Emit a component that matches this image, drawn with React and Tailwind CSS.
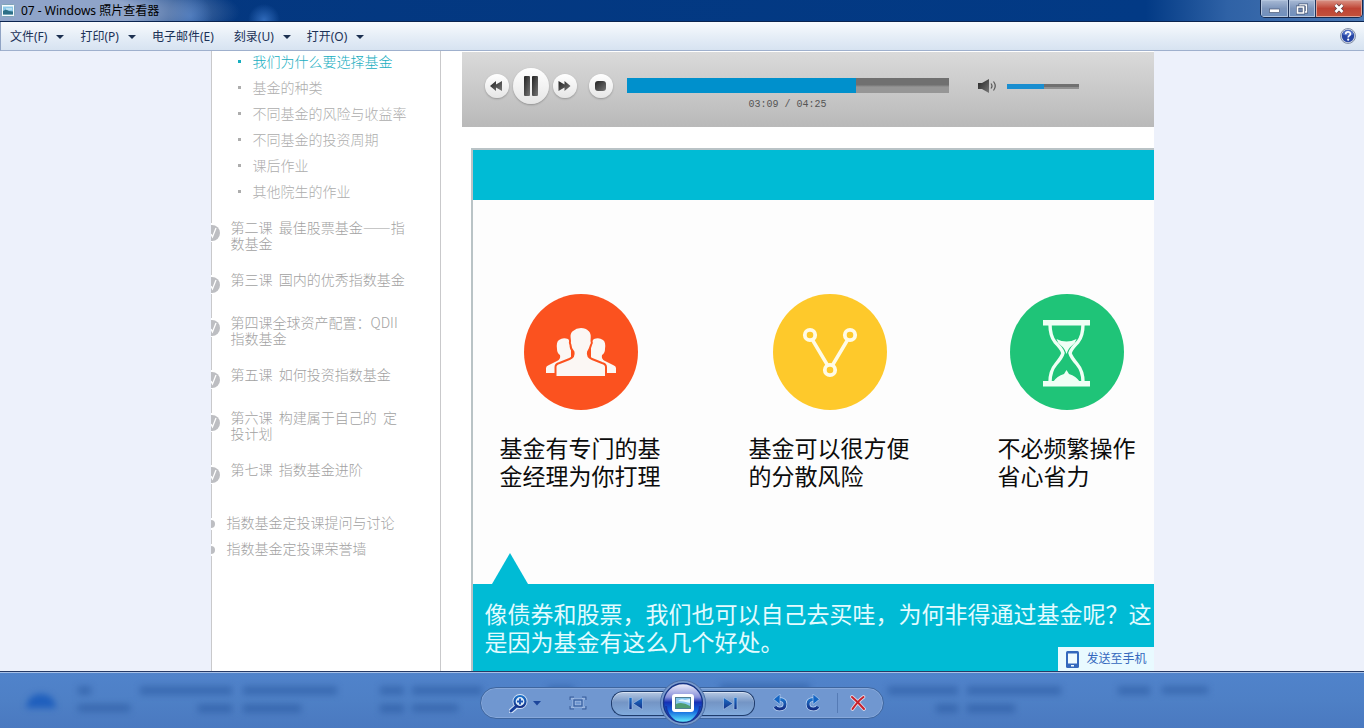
import React from "react";

const uiFont = "font-['Noto_Sans','Noto_Sans_CJK_SC',sans-serif]";

const menus = [
  { label: "文件(F)", arrow: true },
  { label: "打印(P)", arrow: true },
  { label: "电子邮件(E)", arrow: false },
  { label: "刻录(U)", arrow: true },
  { label: "打开(O)", arrow: true },
];

const topics = ["我们为什么要选择基金", "基金的种类", "不同基金的风险与收益率", "不同基金的投资周期", "课后作业", "其他院生的作业"];

const lessons = [
  "第二课\u00a0 最佳股票基金——指数基金",
  "第三课\u00a0 国内的优秀指数基金",
  "第四课全球资产配置：QDII指数基金",
  "第五课\u00a0 如何投资指数基金",
  "第六课\u00a0 构建属于自己的\u00a0 定投计划",
  "第七课\u00a0 指数基金进阶",
];

function PhotoIcon() {
  return (
    <svg width="14" height="13" viewBox="0 0 14 13" aria-hidden="true">
      <rect x="0.5" y="0.5" width="13" height="12" rx="1" fill="#f7fbfd" stroke="#7fa3b8" />
      <rect x="2" y="2.5" width="10" height="8" fill="#8cc8e8" />
      <path d="M2 7l3-1.5 3 1.5 4 .5v3H2z" fill="#2d6f86" />
      <path d="M5 4.5h6v1H5z" fill="#e3f4fb" />
    </svg>
  );
}

function TitleBar() {
  return (
    <header className="flex h-[22px] shrink-0 items-start justify-between border-b border-[#0a2450] bg-[radial-gradient(ellipse_190px_40px_at_50px_12px,#8fa4c9_45%,transparent_100%),radial-gradient(circle_at_190px_16px,#1d5cb4_0,transparent_22px),radial-gradient(circle_at_264px_20px,#2f69b9_0,transparent_16px),linear-gradient(90deg,#04377f_0%,#023a85_84%,#2f62a6_90%,#4b78b4_100%)]">
      <div className="flex h-[21px] items-center gap-1.5 pl-px">
        <PhotoIcon />
        <h1 className="text-xs leading-5 text-black">07 - Windows 照片查看器</h1>
      </div>
      <div className="mr-px flex h-[18px] overflow-hidden rounded-b-[5px] border border-t-0 border-[#16294d]">
        <button aria-label="最小化" className="flex w-7 items-center justify-center border-r border-[#20355c] bg-linear-to-b from-[#a9bbd6] via-[#7d95bb] to-[#6f90bf] shadow-[inset_0_0_0_1px_#b4c5de]">
          <svg width="11" height="10" viewBox="0 0 11 10"><rect x="0.5" y="5" width="10" height="3.500" fill="#fff" stroke="#4a5a78" strokeWidth="0.7" /></svg>
        </button>
        <button aria-label="还原" className="flex w-[27px] items-center justify-center border-r border-[#20355c] bg-linear-to-b from-[#a9bbd6] via-[#7d95bb] to-[#6f90bf] shadow-[inset_0_0_0_1px_#b4c5de]">
          <svg width="12" height="12" viewBox="0 0 12 12" fill="none">
            <path d="M4 2h6.500v7H4z" stroke="#46587a" strokeWidth="3" />
            <path d="M4 2h6.500v7H4z" stroke="#fff" strokeWidth="1.500" />
            <path d="M1.500 4h6v6h-6z" fill="#6d83aa" stroke="#46587a" strokeWidth="3" />
            <path d="M1.500 4h6v6h-6z" stroke="#fff" strokeWidth="1.700" />
          </svg>
        </button>
        <button aria-label="关闭" className="flex w-[46px] items-center justify-center bg-linear-to-b from-[#d99387] via-[#bf4334] to-[#c2523c] shadow-[inset_0_0_0_1px_#dda398]">
          <svg width="12" height="11" viewBox="0 0 12 11">
            <path d="M2.500 2l7 7M9.500 2l-7 7" stroke="#5d3b40" strokeWidth="4" />
            <path d="M2.500 2l7 7M9.500 2l-7 7" stroke="#fff" strokeWidth="2.600" />
          </svg>
        </button>
      </div>
    </header>
  );
}

function MenuBar() {
  return (
    <nav className="flex h-[29px] shrink-0 items-center justify-between border-b border-l border-b-[#9fb0cd] border-l-[#8fa3c4] bg-linear-to-b from-[#f8fbfe] via-[#e6eef7] to-[#d7e3f1] pr-2 pl-[9px]">
      <div className="flex items-center gap-4 pt-px">
        {menus.map((m) => (
          <button key={m.label} className={`flex items-center gap-[9px] text-xs leading-5 whitespace-nowrap text-[#1b3157] ${m.arrow ? "" : "pr-1"}`}>
            {m.label}
            {m.arrow && (
              <svg width="8" height="4" viewBox="0 0 8 4" aria-hidden="true"><path d="M0 0h8L4 4z" fill="#1c3050" /></svg>
            )}
          </button>
        ))}
      </div>
      <button aria-label="帮助">
        <svg width="16" height="16" viewBox="0 0 16 16">
          <circle cx="8" cy="8" r="7.500" fill="#d3dae6" stroke="#6e7c98" strokeWidth="0.800" />
          <circle cx="8" cy="8" r="6.200" fill="#2746a5" />
          <path d="M2.500 6.500a5.600 5.600 0 0 1 11 0q-5.500 2-11 0z" fill="#5573c6" />
          <path d="M5.700 6.200c0-3 4.700-3 4.700-.2 0 1.600-2.200 1.600-2.200 3.400" fill="none" stroke="#fff" strokeWidth="1.700" />
          <circle cx="8.200" cy="11.700" r="1.100" fill="#fff" />
        </svg>
      </button>
    </nav>
  );
}

function Sidebar() {
  return (
    <aside className="w-[230px] shrink-0 border-x border-[#c9c9cb] bg-white font-['Noto_Sans_CJK_SC',sans-serif] text-sm font-light whitespace-nowrap text-[#a2a2a2]">
      <ul className="flex flex-col gap-1.5 pl-[26px] leading-5">
        {topics.map((t, i) => (
          <li key={t} className={i === 0 ? "text-[#17aebf]" : "text-[#adadad]"}>
            <a href="#topic" className="flex items-center gap-3">
              <span className="size-[3px] bg-current" />
              {t}
            </a>
          </li>
        ))}
      </ul>
      <ul className="-ml-px flex flex-col gap-5 pt-[18px] leading-4">
        {lessons.map((lesson) => (
          <li key={lesson} className="flex min-h-[23px] items-start gap-[11px]">
            <svg width="9" height="23" viewBox="0 0 9 23" className="shrink-0" aria-hidden="true">
              <path d="M0 4h9v19H0z" fill="#fff" />
              <circle cx="1" cy="14" r="8" fill="#bdbec2" />
              <path d="M0 15l1.500 3L5 9" fill="none" stroke="#fff" strokeWidth="1.300" />
            </svg>
            <a href="#lesson" className="block w-[178px] whitespace-normal">{lesson}</a>
          </li>
        ))}
      </ul>
      <ul className="-ml-px flex flex-col gap-2.5 pt-[30px] leading-4">
        {["指数基金定投课提问与讨论", "指数基金定投课荣誉墙"].map((t) => (
          <li key={t} className="flex items-center gap-3">
            <svg width="4" height="16" viewBox="0 0 4 16" aria-hidden="true">
              <path d="M0 4h4v12H0z" fill="#fff" />
              <circle cx="0" cy="10" r="4" fill="#bdbec2" />
            </svg>
            <a href="#discussion">{t}</a>
          </li>
        ))}
      </ul>
    </aside>
  );
}

const round = "flex size-6 items-center justify-center rounded-full bg-linear-to-b from-white to-[#e6e6e6] shadow-[0_1px_2px_rgba(0,0,0,0.25)]";

function Player() {
  return (
    <section className="flex h-[75px] items-start bg-linear-to-b from-[#dadada] to-[#b9b9b9] pt-4 pl-[23px]">
      <svg width="0" height="0" className="absolute" aria-hidden="true">
        <linearGradient id="ink" x1="0" x2="1" y1="0" y2="1">
          <stop offset="0" stopColor="#222" />
          <stop offset="1" stopColor="#777" />
        </linearGradient>
      </svg>
      <div className="flex h-9 items-center gap-1">
        <button aria-label="后退" className={round}>
          <svg width="13" height="10" viewBox="0 0 13 10"><path d="M0 5l6-5v3.500L12 0v10L6 6.500V10z" fill="url(#ink)" /></svg>
        </button>
        <button aria-label="暂停" className="flex size-9 items-center justify-center rounded-full bg-linear-to-b from-white to-[#e6e6e6] shadow-[0_1px_2px_rgba(0,0,0,0.25)]">
          <svg width="14" height="20" viewBox="0 0 14 20"><rect width="6" height="20" rx="1" fill="url(#ink)" /><rect x="8" width="6" height="20" rx="1" fill="url(#ink)" /></svg>
        </button>
        <button aria-label="前进" className={round}>
          <svg width="13" height="10" viewBox="0 0 13 10"><path d="M12.500 5l-6-5v3.500L.5 0v10l6-3.500V10z" fill="url(#ink)" /></svg>
        </button>
      </div>
      <div className="flex h-9 items-center pl-3">
        <button aria-label="停止" className={round}>
          <svg width="11" height="10" viewBox="0 0 11 10"><rect width="11" height="10" rx="3" fill="url(#ink)" /></svg>
        </button>
      </div>
      <div className="ml-[14px] flex w-[322px] flex-col items-center pt-2.5">
        <input
          type="range" aria-label="播放进度" min="0" max="265" defaultValue="189"
          className="m-0 block h-[15px] w-full appearance-none bg-[linear-gradient(90deg,#0090cc_71%,transparent_71%),linear-gradient(180deg,#707070_45%,#969696_60%)] [&::-webkit-slider-thumb]:size-0 [&::-webkit-slider-thumb]:appearance-none"
        />
        <span className="pt-1 font-['Liberation_Mono',monospace] text-[10px] leading-4 text-[#555]">03:09 / 04:25</span>
      </div>
      <div className="flex h-9 items-center gap-2.5 pl-[29px]">
        <svg width="19" height="14" viewBox="0 0 19 14" role="img" aria-label="音量">
          <path d="M0 4h4l7-4v14L4 10H0z" fill="url(#ink)" />
          <path d="M13 4.500q2 2.500 0 5M15.500 2.500q3.500 4.500 0 9" fill="none" stroke="#555" strokeWidth="1.200" />
        </svg>
        <input
          type="range" aria-label="音量" defaultValue="50"
          className="m-0 block h-[5px] w-[72px] appearance-none bg-[linear-gradient(90deg,#1a8ed0_51%,transparent_51%),linear-gradient(180deg,#707070_50%,#909090_60%)] [&::-webkit-slider-thumb]:size-0 [&::-webkit-slider-thumb]:appearance-none"
        />
      </div>
    </section>
  );
}

function PeopleDrawing() {
  return (
    <svg width="114" height="116" viewBox="0 0 114 116" aria-hidden="true">
      <ellipse cx="57" cy="58" rx="57" ry="58" fill="#fb521f" />
      <g fill="#fbf7f4">
        <path d="M22 79v-5q0-2 3-3l8-4q4-2 3-6-3-2-3-6-1-7 2-9 4-3 9-1 3 2 3 9v12l1 5-12 6-2 2z" />
        <path d="M92 79v-5q0-2-3-3l-8-4q-4-2-3-6 3-2 3-6 1-7-2-9-4-3-9-1-3 2-3 9v12l-1 5 12 6 2 2z" />
        <path d="M31.500 83V73q0-3 4-4l10-4q5-2 4-7-3-3-3-7-1-2-.5-4-1.500-8 2-10.500 4-3.500 9-3.500t8.500 3.500q3 2.500 2 10.500 1 2-.5 4-1 4-3 7-1 5 4 7l10 4q4 1 4 4v10z" stroke="#fb521f" strokeWidth="2" />
      </g>
    </svg>
  );
}

function NodesDrawing() {
  return (
    <svg width="114" height="116" viewBox="0 0 114 116" aria-hidden="true">
      <ellipse cx="57" cy="58" rx="57" ry="58" fill="#fec92b" />
      <path d="M39.500 46L55 72M74.500 46L59 72" stroke="#fffbe6" strokeWidth="3.500" />
      <g fill="#fec92b" stroke="#fffbe6" strokeWidth="3.800">
        <circle cx="37" cy="41" r="5.200" />
        <circle cx="77" cy="41" r="5.200" />
        <circle cx="57" cy="76" r="5.200" />
      </g>
    </svg>
  );
}

function HourglassDrawing() {
  return (
    <svg width="114" height="116" viewBox="0 0 114 116" aria-hidden="true">
      <ellipse cx="57" cy="58" rx="57" ry="58" fill="#1fc478" />
      <g fill="#effff5">
        <path d="M33 26h47v5.500H33zM33 87h47v5.500H33z" />
        <path d="M46.500 45q10 5 20 0-1 4-5 7-3 2-5 8-2-6-5-8-4-3-5-7z" />
        <path d="M43 88q4-6 11-8l2.500-4 2.500 4q7 2 11 8z" />
        <path d="M40 30q0 12 5 18 7 7 8 11-1 4-7 11-6 7-6 18M73 30q0 12-5 18-7 7-8 11 1 4 7 11 6 7 6 18" fill="none" stroke="#effff5" strokeWidth="3.400" />
      </g>
    </svg>
  );
}

const features = [
  { art: <PeopleDrawing />, text: "基金有专门的基金经理为你打理", width: "w-[162px]" },
  { art: <NodesDrawing />, text: "基金可以很方便的分散风险", width: "w-[162px]" },
  { art: <HourglassDrawing />, text: "不必频繁操作省心省力", width: "w-[139px]" },
];

function Slide() {
  return (
    <section className="relative ml-[9px] flex min-h-0 flex-1 flex-col border-t-2 border-l-2 border-[#b9c3c6] font-['Noto_Sans_CJK_SC',sans-serif] text-[23px] leading-7">
      <div className="h-[50px] shrink-0 bg-[#00bbd5]" />
      <div className="flex min-h-0 flex-1 flex-col justify-between bg-[#fdfdfd] pt-[94px]">
        <div className="grid grid-cols-[249px_249px_1fr] justify-items-start pl-[27px]">
          {features.map((f) => (
            <div key={f.text} className="flex flex-col items-center gap-[23px]">
              {f.art}
              <p className={`text-[#0c0c0c] ${f.width}`}>{f.text}</p>
            </div>
          ))}
        </div>
        <svg width="36" height="31" viewBox="0 0 36 31" className="ml-[19px] block" aria-hidden="true"><path d="M18 0l18 31H0z" fill="#00bbd5" /></svg>
      </div>
      <p className="h-[87px] shrink-0 bg-[#00bbd5] pt-[15px] pl-3 text-[#e3fbff]">
        像债券和股票，我们也可以自己去买哇，为何非得通过基金呢？这是因为基金有这么几个好处。
      </p>
      <button className={`absolute right-0 bottom-0 flex h-6 w-24 items-center gap-2 bg-[#e9faff] pl-2 text-xs text-[#3468bd] ${uiFont}`}>
        <svg width="13" height="17" viewBox="0 0 13 17" aria-hidden="true">
          <rect width="13" height="17" rx="1.500" fill="#3468bd" />
          <path d="M2 2.500h9v10H2zM5 14h3v1.500H5z" fill="#effbff" />
        </svg>
        发送至手机
      </button>
    </section>
  );
}

const smudges = [
  [78, 14, 13, 9], [140, 14, 92, 9], [243, 14, 94, 9], [380, 14, 24, 9], [412, 14, 70, 9],
  [78, 32, 52, 8], [198, 32, 34, 9], [243, 32, 58, 9], [380, 32, 24, 9], [412, 32, 46, 8],
  [888, 14, 70, 9], [967, 14, 94, 9], [1118, 14, 32, 9], [1162, 14, 46, 8], [936, 32, 22, 9], [967, 32, 48, 9], [548, 14, 26, 9], [720, 12, 90, 8],
];

function Toolbar() {
  return (
    <footer className="relative flex h-[57px] shrink-0 justify-center overflow-hidden border-t border-[#263a66] bg-linear-to-b from-[#5083cb] via-[#4e80c6] to-[#4a79c0] shadow-[inset_0_1px_0_#a8c0e6]">
      <svg className="absolute inset-0 blur-[3px]" width="1364" height="57" aria-hidden="true">
        <path d="M26 36q2-14 15-14t15 14z" fill="#1f5fbd" />
        {smudges.map(([x, y, w, h], i) => <rect key={i} x={x} y={y} width={w} height={h} fill="#24529a" opacity="0.45" />)}
      </svg>
      <svg width="0" height="0" className="absolute" aria-hidden="true">
        <linearGradient id="blue" x1="0" x2="0" y1="0" y2="1">
          <stop offset="0" stopColor="#1b70c8" />
          <stop offset="1" stopColor="#142f86" />
        </linearGradient>
      </svg>
      <div className="relative mt-[15px] flex h-8 w-[404px] items-center rounded-full border border-[#3e669f] bg-[#7097d0] shadow-[inset_0_0_0_1px_#87a8da]">
        <button aria-label="缩放" className="ml-7 flex items-center gap-1">
          <svg width="20" height="19" viewBox="0 0 20 19">
            <path d="M8 12l-6 5" stroke="#d3e2f6" strokeWidth="5" strokeLinecap="round" />
            <circle cx="11" cy="7.500" r="5.500" fill="#dcebf8" stroke="#d3e2f6" strokeWidth="4" />
            <path d="M7.500 12l-5.500 5" stroke="#17409b" strokeWidth="3" strokeLinecap="round" />
            <circle cx="11" cy="7.500" r="5.500" fill="#dcebf8" stroke="url(#blue)" strokeWidth="2.200" />
            <path d="M8 7.500h6M11 4.500v6" stroke="#1c55b4" strokeWidth="2" />
          </svg>
          <svg width="8" height="5" viewBox="0 0 8 5"><path d="M0 0h8L4 4.500z" fill="#1c469b" /></svg>
        </button>
        <button aria-label="实际大小" className="ml-7 opacity-70">
          <svg width="18" height="14" viewBox="0 0 18 14" fill="none" stroke="#254f94" strokeWidth="1.500">
            <path d="M1 4V1h4M13 1h4v3M17 10v3h-4M5 13H1v-3M5 4h8v6H5z" stroke="#bdd1ee" strokeWidth="3" />
            <path d="M1 4V1h4M13 1h4v3M17 10v3h-4M5 13H1v-3M5 4h8v6H5z" />
          </svg>
        </button>
        <button aria-label="上一个" className="ml-6 flex h-[25px] w-[53px] items-center justify-center rounded-l-xl border border-r-0 border-[#1f3c6c] bg-linear-to-b from-[#b7c9e3] via-[#7495c5] via-45% to-[#81abdd] pr-1 shadow-[inset_0_1px_0_#d5e1f2]">
          <svg width="16" height="13" viewBox="0 0 16 13"><path d="M1 .5h3v12H1zM14.500.5v12L5 6.500z" fill="url(#blue)" stroke="#abc9ee" strokeWidth="0.600" /></svg>
        </button>
        <button aria-label="放映幻灯片" className="relative z-10 -mx-1 size-[46px] shrink-0">
          <svg width="46" height="46" viewBox="0 0 46 46">
            <defs>
              <linearGradient id="orb" x1="0" x2="0" y1="0" y2="1">
                <stop offset="0" stopColor="#f0f0fb" />
                <stop offset="0.350" stopColor="#8890da" />
                <stop offset="0.480" stopColor="#1730b4" />
                <stop offset="0.700" stopColor="#1264dd" />
                <stop offset="1" stopColor="#63f1ff" />
              </linearGradient>
            </defs>
            <circle cx="23" cy="23" r="22.500" fill="#7899cb" stroke="#496da5" />
            <circle cx="23" cy="23" r="19.500" fill="url(#orb)" stroke="#173586" strokeWidth="1.300" />
            <path d="M5 26Q6 38 16 41 7 34 7 26zM41 26Q40 38 30 41q9-7 9-15z" fill="#1735a5" />
            <rect x="12" y="14" width="22" height="18" rx="3" fill="#fff" />
            <rect x="15.500" y="17.500" width="15" height="11" fill="#87c8ee" stroke="#507f91" />
            <path d="M16 24q6-3 14 2v2H16z" fill="#4f9d72" />
            <path d="M18 21q3-3 7-1l5-1v4q-7-2-12-2z" fill="#e7f6fd" />
          </svg>
        </button>
        <button aria-label="下一个" className="flex h-[25px] w-[53px] items-center justify-center rounded-r-xl border border-l-0 border-[#1f3c6c] bg-linear-to-b from-[#b7c9e3] via-[#7495c5] via-45% to-[#81abdd] pl-1 shadow-[inset_0_1px_0_#d5e1f2]">
          <svg width="16" height="13" viewBox="0 0 16 13"><path d="M15 .5h-3v12h3zM1.500.5v12l9.500-6z" fill="url(#blue)" stroke="#abc9ee" strokeWidth="0.600" /></svg>
        </button>
        <button aria-label="逆时针旋转" className="ml-[17px]">
          <svg width="16" height="18" viewBox="0 0 16 18">
            <path d="M6 5.500q7-.5 7 4.500 0 5-5.500 5-3 0-4.500-2.500" fill="none" stroke="#bdd5f4" strokeWidth="4.500" />
            <path d="M6 5.500q7-.5 7 4.500 0 5-5.500 5-3 0-4.500-2.500" fill="none" stroke="url(#blue)" strokeWidth="3" />
            <path d="M8 0v10.500L1.500 5.300z" fill="#1465c4" stroke="#bdd5f4" strokeWidth="0.600" />
          </svg>
        </button>
        <button aria-label="顺时针旋转" className="ml-[17px]">
          <svg width="16" height="18" viewBox="0 0 16 18">
            <path d="M10 5.500q-7-.5-7 4.500 0 5 5.500 5 3 0 4.500-2.500" fill="none" stroke="#bdd5f4" strokeWidth="4.500" />
            <path d="M10 5.500q-7-.5-7 4.500 0 5 5.500 5 3 0 4.500-2.500" fill="none" stroke="url(#blue)" strokeWidth="3" />
            <path d="M8 0v10.500l6.500-5.200z" fill="#1465c4" stroke="#bdd5f4" strokeWidth="0.600" />
          </svg>
        </button>
        <span className="ml-4 h-5 w-px bg-[#557bb5]" />
        <button aria-label="删除" className="ml-3">
          <svg width="16" height="16" viewBox="0 0 16 16" strokeLinecap="round">
            <path d="M2 2q6 5 12 12M13.500 2Q8 6 2.500 14" fill="none" stroke="#e1d9e8" strokeWidth="3.600" />
            <path d="M2 2q6 5 12 12M13.500 2Q8 6 2.500 14" fill="none" stroke="#c8202b" strokeWidth="2" />
          </svg>
        </button>
      </div>
    </footer>
  );
}

export default function App() {
  return (
    <div lang="zh-CN" className={`flex h-screen flex-col overflow-hidden bg-[#edf1fb] ${uiFont}`}>
      <TitleBar />
      <MenuBar />
      <main className="mx-auto flex min-h-0 w-[943px] max-w-full flex-1 overflow-hidden bg-white">
        <Sidebar />
        <div className="ml-[21px] flex min-w-0 flex-1 flex-col gap-[21px] pt-px">
          <Player />
          <Slide />
        </div>
      </main>
      <Toolbar />
    </div>
  );
}
